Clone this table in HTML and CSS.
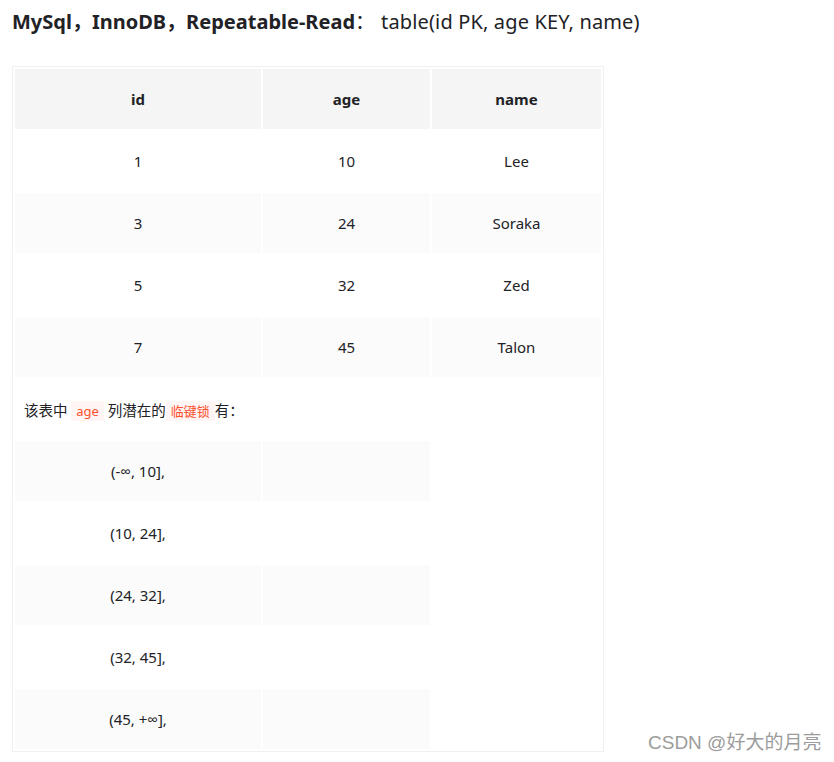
FILE: index.html
```html
<!DOCTYPE html>
<html lang="zh">
<head>
<meta charset="utf-8">
<title>临键锁</title>
<link rel="stylesheet" href="styles.css">
</head>
<body>
<div class="article">
  <h3 class="title"><strong>MySql，InnoDB，Repeatable-Read</strong>：<span class="rest">table(id PK, age KEY, name)</span></h3>
  <table class="md-table">
    <colgroup>
      <col class="c1"><col class="c2"><col class="c3">
    </colgroup>
    <thead>
      <tr><th>id</th><th>age</th><th>name</th></tr>
    </thead>
    <tbody>
      <tr><td>1</td><td>10</td><td>Lee</td></tr>
      <tr><td>3</td><td>24</td><td>Soraka</td></tr>
      <tr><td>5</td><td>32</td><td>Zed</td></tr>
      <tr><td>7</td><td>45</td><td>Talon</td></tr>
      <tr><td class="note" colspan="3">该表中 <code>age</code> 列潜在的<code>临键锁</code>有：</td></tr>
      <tr><td>(-∞, 10],</td><td></td></tr>
      <tr><td>(10, 24],</td><td></td></tr>
      <tr><td>(24, 32],</td><td></td></tr>
      <tr><td>(32, 45],</td><td></td></tr>
      <tr><td>(45, +∞],</td><td></td></tr>
    </tbody>
  </table>
</div>
<div class="watermark">CSDN @好大的月亮</div>
</body>
</html>
```
FILE: styles.css
```css
html, body {
  margin: 0;
  padding: 0;
  background: #ffffff;
}
body {
  font-family: "Noto Sans", "Open Sans", "Noto Sans CJK SC", sans-serif;
  color: #222226;
  position: relative;
  width: 834px;
  height: 762px;
  overflow: hidden;
}
.article {
  padding: 8px 12px 0 12px;
}
.title {
  margin: 0;
  font-size: 20px;
  line-height: 28px;
  font-weight: normal;
  color: #222226;
}
.title strong {
  font-weight: 700;
}
.title .rest {
  margin-left: 6px;
  letter-spacing: 0.15px;
}
.md-table {
  margin-top: 30px;
  width: 592px;
  table-layout: fixed;
  border: 1px solid #f0f0f0;
  border-spacing: 2px;
  font-size: 15px;
  color: #222226;
}
.c1 { width: 246px; }
.c2 { width: 167px; }
.c3 { width: 169px; }
.md-table th,
.md-table td {
  height: 60px;
  padding: 0 8px;
  text-align: center;
  box-sizing: border-box;
}
.md-table th {
  background: #f5f5f5;
  font-weight: 700;
}
.md-table tbody tr:nth-child(even) td {
  background: #fbfbfb;
}
.md-table td.note {
  text-align: left;
  padding-left: 9px;
  background: #ffffff;
  font-size: 14.5px;
}
code {
  font-family: "Noto Sans", "Noto Sans CJK SC", sans-serif;
  font-size: 13px;
  color: #ff502c;
  background: #fff5f5;
  padding: 1px 5px;
  border-radius: 2px;
}
.watermark {
  position: absolute;
  left: 648px;
  top: 731px;
  font-family: "Liberation Sans", "Noto Sans CJK SC", sans-serif;
  font-size: 19px;
  line-height: 24px;
  color: #9c9c9c;
}
```
